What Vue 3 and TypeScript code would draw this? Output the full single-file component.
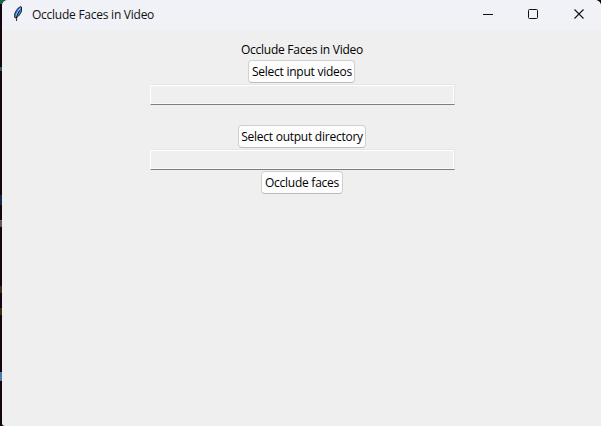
<script setup lang="ts">
import { ref } from 'vue'

const title = 'Occlude Faces in Video'
const inputVideos = ref<string>('')
const outputDirectory = ref<string>('')
</script>

<template>
  <div class="desktop">
    <div class="edge">
      <i class="mark green"></i>
      <i class="mark teal"></i>
      <i class="mark blue"></i>
      <i class="mark amber"></i>
      <i class="mark olive"></i>
      <i class="mark olive low"></i>
      <i class="mark sky"></i>
    </div>
    <main class="window">
      <header class="titlebar">
        <svg class="feather" width="12" height="18" viewBox="0 0 12 18">
          <path d="M8.7 1.5L9.5 2V6L8.5 8.5L6.5 11L4 13L2.7 12.5V9L4 6L6 3.3Z" fill="#3f83d6" stroke="#1b2430" />
          <path d="M8 3.5L5.5 7.5L4 11.5" fill="none" stroke="#a9cdf3" />
          <path d="M7.5 5.5L4.8 11L4.5 16" fill="none" stroke="#101318" stroke-width=".9" />
        </svg>
        <span class="text title">{{ title }}</span>
        <div class="controls">
          <svg width="46" height="30" viewBox="0 0 46 30"><path d="M18 14.5H28" stroke="#111" /></svg>
          <svg width="45" height="30" viewBox="0 0 45 30"><rect x="17.5" y="9.5" width="9" height="9" rx="1" fill="none" stroke="#111" /></svg>
          <svg width="46" height="30" viewBox="0 0 46 30"><path d="M18.5 9.5L27.5 18.5M27.5 9.5L18.5 18.5" fill="none" stroke="#111" stroke-width="1.1" /></svg>
        </div>
      </header>
      <section class="content">
        <div class="text heading">{{ title }}</div>
        <button class="text videos">Select input videos</button>
        <div class="field">{{ inputVideos }}</div>
        <button class="text directory">Select output directory</button>
        <div class="field">{{ outputDirectory }}</div>
        <button class="text run">Occlude faces</button>
      </section>
    </main>
  </div>
</template>

<style>
body { margin: 0; overflow: hidden; }
</style>

<style scoped>
.desktop { display: flex; width: 601px; height: 426px; background: #14060e; }
.edge { position: relative; width: 2px; flex: none; background: #14060e; }
.mark { position: absolute; left: 0; width: 2px; height: 2px; }
.green { top: 0; width: 7px; height: 4px; background: #18664a; }
.teal { top: 67px; height: 4px; background: #30525a; }
.blue { top: 195px; height: 10px; background: #192848; }
.amber { top: 220px; height: 7px; background: #6c5449; border-top: 1px solid #477ba7; box-sizing: border-box; }
.olive { top: 286px; height: 7px; background: #3b2e18; }
.low { top: 308px; }
.sky { top: 372px; height: 9px; background: #4e7bad; }
.window { position: relative; display: flex; flex-direction: column; width: 599px; height: 426px; background: #efefef; border-radius: 6px 6px 0 3px; overflow: hidden; }
.text { font-family: "Open Sans", "Noto Sans", sans-serif; font-size: 12px; line-height: 16px; color: #000; letter-spacing: -0.25px; white-space: nowrap; }
.titlebar { display: flex; align-items: center; height: 30px; flex: none; padding-left: 10px; box-sizing: border-box; background: #f0f2f7; }
.feather { display: block; margin: -2px 8px 0 0; }
.title { width: 123px; color: #111; }
.controls { display: flex; margin-left: auto; margin-right: -1px; }
.controls svg { display: block; }
.content { display: flex; flex-direction: column; align-items: center; padding: 12px 0 0 0; }
.heading { height: 18px; padding-left: 1px; }
button { display: flex; align-items: center; justify-content: center; height: 23px; padding: 0 0 0 1px; box-sizing: border-box; border: 1px solid #d0d0d0; border-bottom-color: #bcbcbc; border-radius: 4px; background: #fdfdfd; }
.videos { width: 107px; }
.directory { width: 128px; }
.run { width: 82px; }
.field { width: 305px; height: 21px; box-sizing: border-box; margin: 1px 0 20px 2px; border: 1px solid #e5e5e5; border-left: 1px solid #fff; border-bottom-color: #7e7e7e; box-shadow: inset 0 1px #fff, inset -1px 0 #fff, inset 0 -1px #f8f8f8; }
.directory + .field { margin: 1px 0 1px 2px; }
</style>
